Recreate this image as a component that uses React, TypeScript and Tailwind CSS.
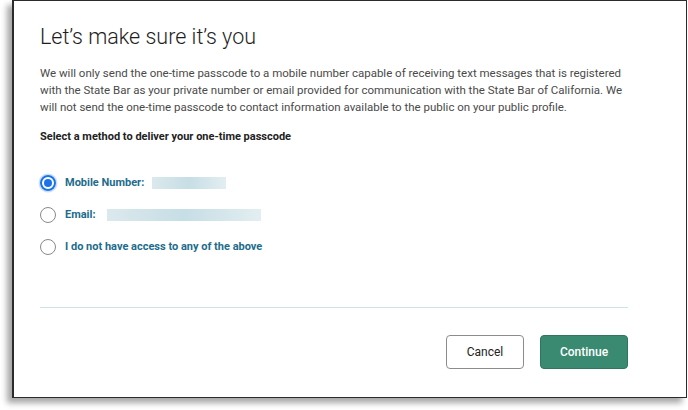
import React, { useState } from 'react';

const options = [
  { id: 'mobile', label: 'Mobile Number:', redact: 'w-[74px] ml-[8px]' },
  { id: 'email', label: 'Email:', redact: 'w-[154px] ml-[11px]' },
  { id: 'none', label: 'I do not have access to any of the above', redact: '' },
];

export default function App() {
  const [method, setMethod] = useState('mobile');

  return (
    <div className="w-[688px] h-[410px] bg-white overflow-hidden" style={{ fontFamily: 'Roboto, "Liberation Sans", sans-serif' }}>
      <div className="ml-[12px] w-[675px] h-[398px] bg-white border border-l-2 border-[#2b2b2b] shadow-[-5px_5px_6px_rgba(0,0,0,0.35)] flex flex-col pl-[26px] pr-[58px]">
        {/* Header */}
        <h1 className="mt-[21px] text-[21.5px] leading-[30px] font-light text-[#1e1e1e]">Let’s make sure it’s you</h1>
        <p className="mt-[13px] -mr-[40px] text-[11.5px] leading-[17px] text-[#4a4a4a] whitespace-nowrap">
          We will only send the one-time passcode to a mobile number capable of receiving text messages that is registered
          <br />
          with the State Bar as your private number or email provided for communication with the State Bar of California. We
          <br />
          will not send the one-time passcode to contact information available to the public on your public profile.
        </p>
        <p className="mt-[13px] text-[11px] leading-[16px] font-bold text-[#222]">Select a method to deliver your one-time passcode</p>

        {/* Options */}
        <div className="mt-[30px] flex flex-col gap-[16px]">
          {options.map((o) => (
            <label key={o.id} className="flex items-center h-[16px] cursor-pointer" onClick={() => setMethod(o.id)}>
              <span
                className={
                  method === o.id
                    ? 'w-[16px] h-[16px] rounded-full border-2 border-[#1a73e8] flex items-center justify-center shadow-[0_0_0_1.5px_rgba(26,115,232,0.22)]'
                    : 'w-[16px] h-[16px] rounded-full border border-[#8a8a8a] flex items-center justify-center'
                }
              >
                {method === o.id && <span className="w-[8px] h-[8px] rounded-full bg-[#1a73e8]" />}
              </span>
              <span className="ml-[9px] text-[11px] font-bold text-[#1d6c8c]">{o.label}</span>
              {o.redact && (
                <span className={`${o.redact} h-[12px] bg-gradient-to-r from-[#dbe9ed] via-[#c6dee5] to-[#e3eef1] blur-[0.5px]`} />
              )}
            </label>
          ))}
        </div>

        <div className="mt-[52px] h-px bg-[#cfe2e6]" />

        {/* Actions */}
        <div className="mt-[27px] flex justify-end gap-[16px]">
          <button className="w-[78px] h-[34px] rounded-[4px] border border-[#8c8c8c] bg-white text-[12px] text-[#222]">Cancel</button>
          <button className="w-[88px] h-[34px] rounded-[4px] border border-[#2f7560] bg-[#3a8a72] text-[12px] font-medium text-white">Continue</button>
        </div>
      </div>
    </div>
  );
}
